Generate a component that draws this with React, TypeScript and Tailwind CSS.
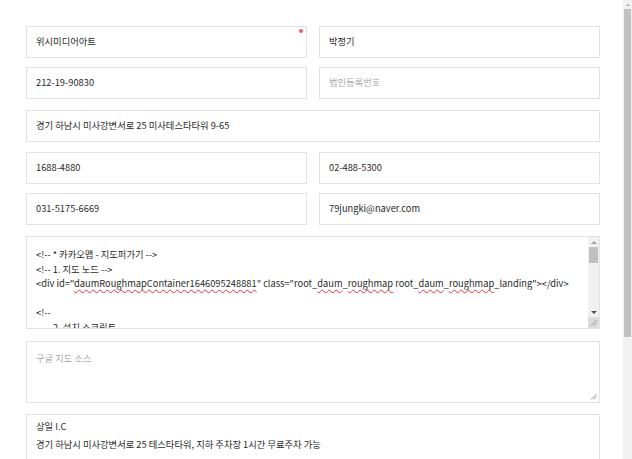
const font = { fontFamily: '"Noto Sans CJK KR", "Noto Sans", sans-serif' }

function Field({ value, placeholder, required }: { value?: string; placeholder?: string; required?: boolean }) {
  return (
    <div className="relative flex h-[32px] min-w-0 flex-1 items-center border border-[#e3e3e3] bg-white px-[9px] text-[9.3px]">
      {value ? <span className="text-[#2a2a2a]">{value}</span> : <span className="text-[#aaa]">{placeholder}</span>}
      {required && <span className="absolute right-[3px] top-[2px] h-[4px] w-[4px] rounded-full bg-[#f55]" />}
    </div>
  )
}

function Grip() {
  return (
    <svg width="7" height="7" viewBox="0 0 7 7" className="absolute bottom-[2px] right-[2px]">
      <path d="M6.5 1 L1 6.5 M6.5 3.5 L3.5 6.5" stroke="#9a9a9a" strokeWidth="1" />
    </svg>
  )
}

function Wavy({ children }: { children: string }) {
  return <span className="underline decoration-wavy decoration-[#e33] decoration-1 underline-offset-2">{children}</span>
}

export default function App() {
  return (
    <div className="flex h-[459px] w-[632px] overflow-hidden bg-white" style={font}>
      <div className="flex min-w-0 flex-1 flex-col gap-[10px] pl-[26px] pr-[23px] pt-[26px]">
        <div className="flex gap-[12px]">
          <Field value="위시미디어아트" required />
          <Field value="박정기" />
        </div>
        <div className="-mt-[1px] flex gap-[12px]">
          <Field value="212-19-90830" />
          <Field placeholder="법인등록번호" />
        </div>
        <div className="mt-[1px] flex">
          <Field value="경기 하남시 미사강변서로 25 미사테스타타워 9-65" />
        </div>
        <div className="flex gap-[12px]">
          <Field value="1688-4880" />
          <Field value="02-488-5300" />
        </div>
        <div className="-mt-[1px] flex gap-[12px]">
          <Field value="031-5175-6669" />
          <Field value="79jungki@naver.com" />
        </div>

        {/* 카카오맵 소스 */}
        <div className="relative mt-[1px] h-[93px] shrink-0 overflow-hidden border border-[#e3e3e3] bg-white pl-[9px] pr-[20px] pt-[10px] text-[9.3px] leading-[14.5px] text-[#2a2a2a]">
          <div>&lt;!-- * 카카오맵 - 지도퍼가기 --&gt;</div>
          <div>&lt;!-- 1. 지도 노드 --&gt;</div>
          <div className="whitespace-nowrap">
            &lt;div id="<Wavy>daumRoughmapContainer1646095248881</Wavy>" class="root_<Wavy>daum</Wavy>_<Wavy>roughmap</Wavy> root_<Wavy>daum</Wavy>_<Wavy>roughmap</Wavy>_landing"&gt;&lt;/div&gt;
          </div>
          <div>&nbsp;</div>
          <div>&lt;!--</div>
          <div className="pl-[17px]">2. 설치 스크립트</div>
          <div className="absolute right-0 top-0 flex h-full w-[11px] flex-col bg-[#f1f1f1]">
            <div className="flex h-[10px] items-center justify-center">
              <div className="h-0 w-0 border-x-[3px] border-b-[3px] border-x-transparent border-b-[#a3a3a3]" />
            </div>
            <div className="mx-[1px] h-[16px] bg-[#c1c1c1]" />
            <div className="flex-1" />
            <div className="flex h-[10px] items-center justify-center">
              <div className="h-0 w-0 border-x-[3px] border-t-[3px] border-x-transparent border-t-[#505050]" />
            </div>
            <div className="relative h-[11px] bg-[#dcdcdc]">
              <Grip />
            </div>
          </div>
        </div>

        {/* 구글 지도 */}
        <div className="relative mt-[2px] h-[62px] shrink-0 border border-[#e3e3e3] bg-white px-[9px] pt-[9px] text-[9.3px] leading-[14.5px] text-[#aaa]">
          구글 지도 소스
          <Grip />
        </div>

        {/* 오시는 길 */}
        <div className="mt-[1px] h-[60px] shrink-0 border border-[#e3e3e3] bg-white px-[9px] pt-[3px] text-[9.3px] leading-[17.5px] text-[#2a2a2a]">
          <div>상일 I.C</div>
          <div>경기 하남시 미사강변서로 25 테스타타워, 지하 주차장 1시간 무료주차 가능</div>
        </div>
      </div>

      {/* page scrollbar */}
      <div className="flex h-full w-[9px] shrink-0 flex-col bg-[#f1f1f1]">
        <div className="flex h-[9px] items-center justify-center">
          <div className="h-0 w-0 border-x-[2px] border-b-[2px] border-x-transparent border-b-[#a3a3a3]" />
        </div>
        <div className="mx-[1px] h-[328px] bg-[#c1c1c1]" />
      </div>
    </div>
  )
}
